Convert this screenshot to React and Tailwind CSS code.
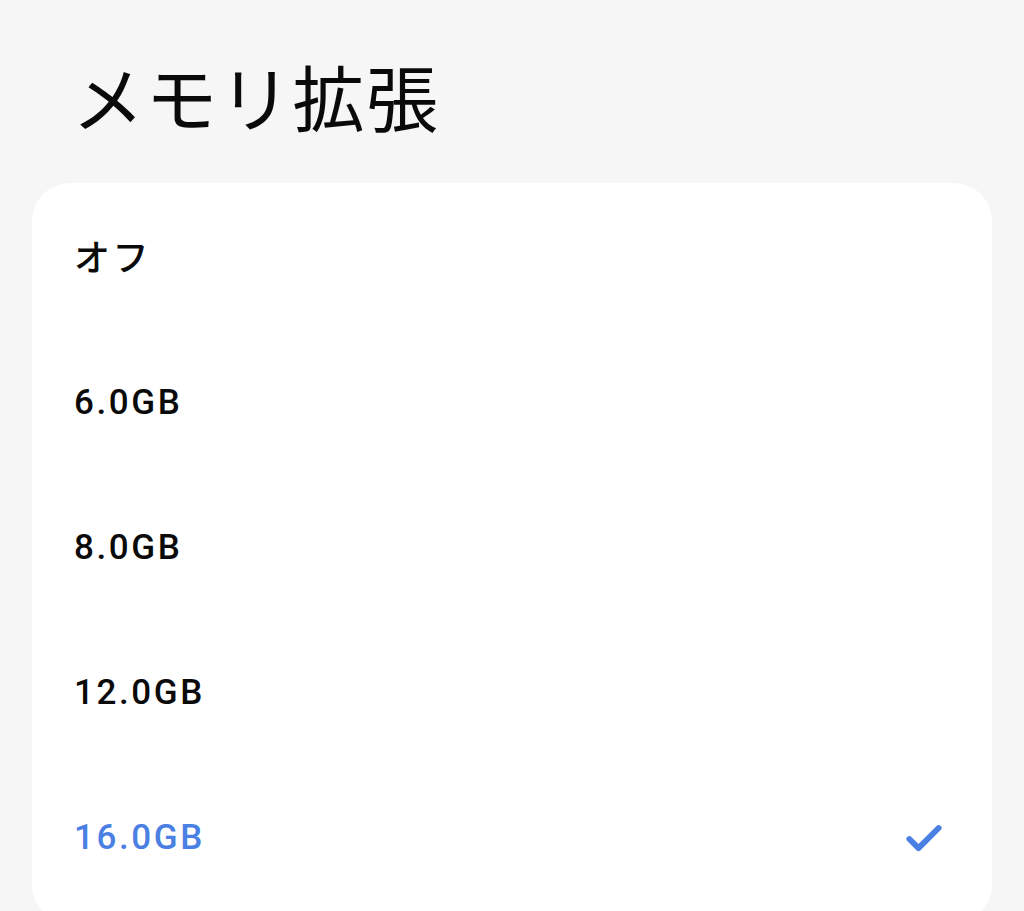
import { Check } from "lucide-react";

const options = [
  { label: "オフ", cjk: true },
  { label: "6.0GB" },
  { label: "8.0GB" },
  { label: "12.0GB" },
  { label: "16.0GB", selected: true },
];

export default function App() {
  return (
    <div className="h-[911px] w-[1024px] overflow-hidden bg-[#f6f6f6] font-['Roboto','Noto_Sans_CJK_JP',sans-serif]">
      <h1 className="h-[183px] pl-[72px] pt-[52px] font-['Noto_Sans_CJK_JP',sans-serif] text-[72px] leading-[86px] font-normal text-[#0a0a0a] tracking-[1.5px]">
        メモリ拡張
      </h1>
      <div className="mx-[32px] h-[740px] rounded-[38px] bg-white pt-[3px]">
        {options.map((opt) => (
          <div key={opt.label} className="flex h-[145px] items-center justify-between pl-[42px] pr-[46px]">
            <span
              className={
                (opt.cjk
                  ? "relative -top-[4px] font-['Noto_Sans_CJK_JP',sans-serif] text-[36px] font-medium tracking-[2.5px] "
                  : "text-[35px] font-medium tracking-[2.6px] ") +
                (opt.selected ? "text-[#4a7fe3]" : "text-[#0a0a0a]")
              }
            >
              {opt.label}
            </span>
            {opt.selected && <Check size={44} strokeWidth={3.2} className="text-[#4a7fe3]" />}
          </div>
        ))}
      </div>
    </div>
  );
}
